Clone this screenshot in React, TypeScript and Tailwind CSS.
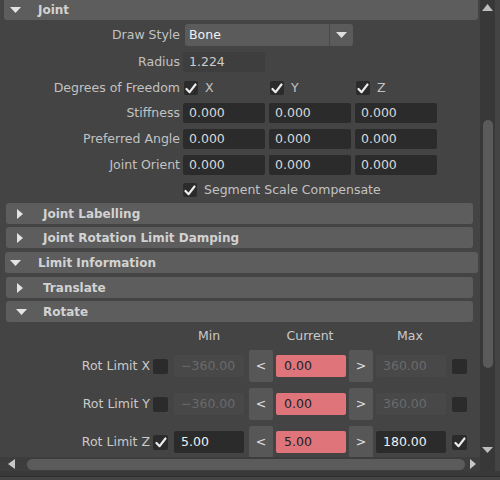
import React from "react";

const Down = () => (
  <svg width="11" height="6" viewBox="0 0 11 6" className="block">
    <path d="M0 0H11L5.5 6Z" fill="#e4e4e4" />
  </svg>
);
const Right = () => (
  <svg width="6" height="10" viewBox="0 0 6 10" className="block ml-[1px]">
    <path d="M0 0L6 5L0 10Z" fill="#e4e4e4" />
  </svg>
);

const Check = ({ on, size = "w-[14px] h-[14px]" }: { on: boolean; size?: string }) => (
  <div className={`${size} rounded-[2px] bg-[#2b2b2b] flex items-center justify-center shrink-0`}>
    {on && (
      <svg width="12" height="11" viewBox="0 0 12 11">
        <path d="M1.5 6 L4.6 9.2 L10.5 1.5" stroke="#ececec" strokeWidth="2.2" fill="none" strokeLinecap="round" strokeLinejoin="round" />
      </svg>
    )}
  </div>
);

function Header({ title, down, nested, cls }: { title: string; down: boolean; nested?: boolean; cls: string }) {
  return (
    <div
      className={`flex items-center h-[21px] rounded-[3px] bg-[#5d5d5d] ${
        nested ? "ml-[6px] w-[467px]" : "ml-[5px] w-[473px]"
      } ${cls}`}
    >
      <div className={nested ? "w-[37px] pl-[10px]" : "w-[33px] pl-[5px]"}>{down ? <Down /> : <Right />}</div>
      <span className="font-bold text-[12px] text-[#d2d2d2] leading-none">{title}</span>
    </div>
  );
}

const Field = ({ v }: { v: string }) => (
  <div className="w-[82px] h-[20px] rounded-[2px] bg-[#2b2b2b] flex items-center pl-[6px] text-[#d8d8d8]">{v}</div>
);

function TripleRow({ label, cls }: { label: string; cls: string }) {
  return (
    <div className={`flex items-center h-[20px] ${cls}`}>
      <div className="w-[180px] text-right">{label}</div>
      <div className="flex gap-[4px] ml-[3px]">
        <Field v="0.000" />
        <Field v="0.000" />
        <Field v="0.000" />
      </div>
    </div>
  );
}

function RotRow({ label, on, min, cur, max }: { label: string; on: boolean; min: string; cur: string; max: string }) {
  const fld = on
    ? "bg-[#2b2b2b] text-[#f0f0f0]"
    : "bg-[#484848] text-[#6a6a6a]";
  return (
    <div className="flex items-center h-[38px]">
      <div className="w-[150px] text-right text-[#cacaca]">{label}</div>
      <div className="ml-[3px]">
        <Check on={on} size="w-[15px] h-[15px]" />
      </div>
      <div className={`ml-[6px] w-[70px] h-[22px] rounded-[2px] flex items-center pl-[7px] ${fld}`}>{min}</div>
      <div className="ml-[5px] w-[24px] h-[32px] rounded-[2px] bg-[#575757] flex items-center justify-center text-[#e0e0e0]">&lt;</div>
      <div className="ml-[3px] w-[70px] h-[22px] rounded-[2px] bg-[#df747b] flex items-center pl-[8px] text-[#222]">{cur}</div>
      <div className="ml-[3px] w-[24px] h-[32px] rounded-[2px] bg-[#575757] flex items-center justify-center text-[#e0e0e0]">&gt;</div>
      <div className={`ml-[3px] w-[70px] h-[22px] rounded-[2px] flex items-center pl-[7px] ${fld}`}>{max}</div>
      <div className="ml-[6px]">
        <Check on={on} size="w-[15px] h-[15px]" />
      </div>
    </div>
  );
}

export default function App() {
  return (
    <div className="w-[500px] h-[480px] bg-[#444444] flex flex-col overflow-hidden font-['DejaVu_Sans',sans-serif] text-[12.5px] text-[#c2c2c2] leading-none">
      <div className="flex h-[457px] shrink-0">
        <div className="w-[480px] h-full overflow-hidden">
          {/* Joint */}
          <div className="flex items-center h-[20px] rounded-b-[3px] bg-[#5d5d5d] ml-[4px] w-[474px]">
            <div className="w-[34px] pl-[6px]">
              <Down />
            </div>
            <span className="font-bold text-[12px] text-[#d2d2d2]">Joint</span>
          </div>

          <div className="flex items-center h-[22px] mt-[4px]">
            <div className="w-[180px] text-right">Draw Style</div>
            <div className="ml-[5px] w-[168px] h-[22px] rounded-[3px] bg-[#5b5b5b] flex items-center">
              <span className="pl-[4px] w-[144px] text-[#f2f2f2]">Bone</span>
              <div className="w-px h-full bg-[#4a4a4a]" />
              <div className="flex-1 flex items-center justify-center">
                <svg width="11" height="6" viewBox="0 0 11 6">
                  <path d="M0 0H11L5.5 6Z" fill="#e0e0e0" />
                </svg>
              </div>
            </div>
          </div>

          <div className="flex items-center h-[20px] mt-[6px]">
            <div className="w-[180px] text-right">Radius</div>
            <div className="ml-[3px] w-[82px] h-[20px] rounded-[2px] bg-[#3e3e3e] flex items-center pl-[6px] text-[#cccccc]">1.224</div>
          </div>

          <div className="flex items-center h-[20px] mt-[6px]">
            <div className="w-[180px] text-right">Degrees of Freedom</div>
            <div className="flex ml-[4px]">
              <div className="w-[86px] flex items-center gap-[7px]">
                <Check on />
                <span>X</span>
              </div>
              <div className="w-[86px] flex items-center gap-[7px]">
                <Check on />
                <span>Y</span>
              </div>
              <div className="w-[86px] flex items-center gap-[7px]">
                <Check on />
                <span>Z</span>
              </div>
            </div>
          </div>

          <TripleRow label="Stiffness" cls="mt-[5px]" />
          <TripleRow label="Preferred Angle" cls="mt-[6px]" />
          <TripleRow label="Joint Orient" cls="mt-[6px]" />

          <div className="flex items-center h-[20px] mt-[5px]">
            <div className="ml-[183px] flex items-center gap-[7px]">
              <Check on />
              <span>Segment Scale Compensate</span>
            </div>
          </div>

          <Header title="Joint Labelling" down={false} nested cls="mt-[3px]" />
          <Header title="Joint Rotation Limit Damping" down={false} nested cls="mt-[3px]" />
          <Header title="Limit Information" down cls="mt-[4px]" />
          <Header title="Translate" down={false} nested cls="mt-[4px]" />
          <Header title="Rotate" down nested cls="mt-[3px]" />

          <div className="flex h-[25px] pt-[8px] text-[#cacaca]">
            <div className="w-[174px]" />
            <div className="w-[70px] text-center">Min</div>
            <div className="w-[31px]" />
            <div className="w-[70px] text-center">Current</div>
            <div className="w-[30px]" />
            <div className="w-[70px] text-center">Max</div>
          </div>

          <RotRow label="Rot Limit X" on={false} min="−360.00" cur="0.00" max="360.00" />
          <RotRow label="Rot Limit Y" on={false} min="−360.00" cur="0.00" max="360.00" />
          <RotRow label="Rot Limit Z" on min="5.00" cur="5.00" max="180.00" />
        </div>

        {/* vertical scrollbar */}
        <div className="w-[15px] h-full bg-[#383838] flex flex-col items-center">
          <div className="mt-[4px]">
            <svg width="11" height="7" viewBox="0 0 11 7">
              <path d="M0 7H11L5.5 0Z" fill="#bdbdbd" />
            </svg>
          </div>
          <div className="mt-[109px] w-[10px] h-[248px] rounded-full bg-[#5a5a5a]" />
          <div className="mt-[79px]">
            <svg width="11" height="6" viewBox="0 0 11 6">
              <path d="M0 0H11L5.5 6Z" fill="#bdbdbd" />
            </svg>
          </div>
        </div>
        <div className="flex-1 bg-[#444444]" />
      </div>

      {/* horizontal scrollbar */}
      <div className="flex h-[14px] shrink-0">
        <div className="w-[480px] bg-[#3d3d3d] flex items-center">
          <div className="ml-[8px]">
            <svg width="7" height="10" viewBox="0 0 7 10">
              <path d="M7 0V10L0 5Z" fill="#c8c8c8" />
            </svg>
          </div>
          <div className="ml-[12px] w-[438px] h-[11px] rounded-full bg-[#5b5b5b]" />
          <div className="ml-[5px]">
            <svg width="6" height="10" viewBox="0 0 6 10">
              <path d="M0 0V10L6 5Z" fill="#c8c8c8" />
            </svg>
          </div>
        </div>
        <div className="w-[15px] bg-[#383838]" />
        <div className="flex-1 bg-[#444444]" />
      </div>
      <div className="h-[5px] bg-[#393939] shrink-0" />
      <div className="h-px bg-[#2e2e2e] shrink-0" />
      <div className="flex-1 bg-[#454545]" />
    </div>
  );
}
